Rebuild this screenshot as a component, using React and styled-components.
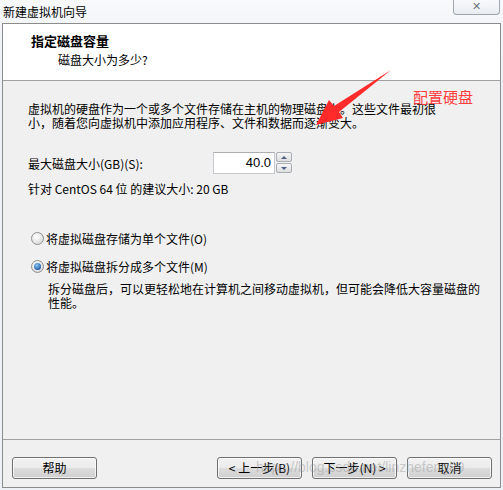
import React from "react";
import styled, { createGlobalStyle } from "styled-components";

const GlobalStyle = createGlobalStyle`
  html, body { margin: 0; padding: 0; }
  body {
    background: #f3f5f8;
    font-family: "Noto Sans CJK SC", "Liberation Sans", sans-serif;
    font-size: 12px;
    color: #000;
  }
`;

const Window = styled.div`
  position: relative;
  width: 503px;
  height: 490px;
  display: flex;
  flex-direction: column;
  overflow: hidden;
  background: linear-gradient(#f7f9fb, #eef1f5 60px);
`;

const TitleBar = styled.div`
  height: 23px;
  display: flex;
  justify-content: space-between;
  align-items: flex-start;
`;

const Title = styled.div`
  padding-left: 3px;
  line-height: 24px;
  font-size: 12px;
`;

const CloseBtn = styled.div`
  width: 45px;
  height: 14px;
  margin-right: 3px;
  border: 1px solid #9ea6b0;
  border-top: none;
  border-radius: 0 0 4px 4px;
  background: linear-gradient(#f8f9fb, #e9edf2);
  display: flex;
  align-items: center;
  justify-content: center;
  color: #6d7680;
  font-family: "DejaVu Sans", sans-serif;
  font-size: 11px;
  font-weight: bold;
  line-height: 14px;
`;

const Dialog = styled.div`
  margin: 0 2px 2px 2px;
  border: 1px solid #8c8c8c;
  flex: 1;
  display: flex;
  flex-direction: column;
  background: #f0f0f0;
`;

const Header = styled.div`
  height: 57px;
  box-sizing: border-box;
  background: #fff;
  border-bottom: 1px solid #a0a0a0;
  padding: 8px 0 0 28px;
`;

const HeaderTitle = styled.div`
  font-size: 13px;
  font-weight: bold;
  line-height: 18px;
`;

const HeaderSub = styled.div`
  margin-top: 1px;
  padding-left: 27px;
  line-height: 18px;
`;

const Body = styled.div`
  flex: 1;
  padding: 21px 0 0 25px;
  display: flex;
  flex-direction: column;
`;

const Para = styled.div`
  line-height: 14px;
  margin-top: ${(p) => p.$top || 0}px;
  padding-left: ${(p) => p.$indent || 0}px;
`;

const SizeRow = styled.div`
  margin-top: 22px;
  display: grid;
  grid-template-columns: 185px auto;
  align-items: center;
  height: 22px;
`;

const Spin = styled.div`
  display: flex;
  gap: 1px;
`;

const SpinInput = styled.div`
  width: 62px;
  height: 22px;
  box-sizing: border-box;
  border: 1px solid #c5c8ce;
  border-top-color: #abadb3;
  background: #fff;
  text-align: right;
  padding-right: 3px;
  font-family: "Liberation Sans", sans-serif;
  font-size: 13px;
  line-height: 20px;
`;

const SpinButtons = styled.div`
  display: flex;
  flex-direction: column;
  gap: 1px;
`;

const SpinBtn = styled.div`
  width: 16px;
  height: 10px;
  box-sizing: border-box;
  border: 1px solid #a9adb5;
  border-radius: 2px;
  background: linear-gradient(#f6f6f6, #dedede);
  display: flex;
  align-items: center;
  justify-content: center;
`;

const Tri = styled.div`
  width: 0;
  height: 0;
  border-left: 3px solid transparent;
  border-right: 3px solid transparent;
  ${(p) =>
    p.$up
      ? "border-bottom: 3px solid #4c5f85;"
      : "border-top: 3px solid #4c5f85;"}
`;

const RadioRow = styled.div`
  display: flex;
  align-items: center;
  gap: 2px;
  height: 18px;
  margin-top: ${(p) => p.$top}px;
  padding-left: 3px;
`;

const RadioCircle = styled.div`
  width: 13px;
  height: 13px;
  box-sizing: border-box;
  border-radius: 50%;
  border: 1px solid #8e8f8f;
  background: radial-gradient(circle at 40% 35%, #ffffff, #d9d9d9 80%);
  display: flex;
  align-items: center;
  justify-content: center;
`;

const RadioDot = styled.div`
  width: 7px;
  height: 7px;
  border-radius: 50%;
  background: radial-gradient(circle at 40% 35%, #8fcaf6, #1b5aa4 75%);
`;

const Footer = styled.div`
  border-top: 1px solid #a0a0a0;
  height: 48px;
  box-sizing: border-box;
  padding: 17px 8px 0 9px;
  display: flex;
  justify-content: space-between;
  align-items: flex-start;
`;

const BtnGroup = styled.div`
  display: flex;
  gap: 10px;
`;

const Button = styled.div`
  width: 85px;
  height: 22px;
  box-sizing: border-box;
  border: 1px solid #707070;
  border-radius: 3px;
  background: linear-gradient(#f2f2f2 0%, #ebebeb 50%, #dddddd 51%, #cfcfcf 100%);
  box-shadow: inset 0 0 0 1px rgba(255, 255, 255, 0.7);
  display: flex;
  align-items: center;
  justify-content: center;
  font-size: 12px;
  line-height: 20px;
`;

const Watermark = styled.div`
  position: absolute;
  left: 256px;
  top: 459px;
  font-family: "Liberation Sans", sans-serif;
  font-size: 14px;
  color: rgba(150, 150, 150, 0.45);
  pointer-events: none;
  white-space: nowrap;
`;

const Note = styled.div`
  position: absolute;
  left: 413px;
  top: 87px;
  color: #ff3d3d;
  font-size: 15px;
  line-height: 20px;
`;

const ArrowSvg = styled.svg`
  position: absolute;
  left: 0;
  top: 0;
  pointer-events: none;
`;

function Radio({ checked, children, top }) {
  return (
    <RadioRow $top={top}>
      <RadioCircle>{checked && <RadioDot />}</RadioCircle>
      <span>{children}</span>
    </RadioRow>
  );
}

export default function App() {
  return (
    <>
      <GlobalStyle />
      <Window>
        <TitleBar>
          <Title>新建虚拟机向导</Title>
          <CloseBtn>✕</CloseBtn>
        </TitleBar>
        <Dialog>
          <Header>
            <HeaderTitle>指定磁盘容量</HeaderTitle>
            <HeaderSub>磁盘大小为多少?</HeaderSub>
          </Header>
          <Body>
            <Para>
              虚拟机的硬盘作为一个或多个文件存储在主机的物理磁盘上。这些文件最初很
              <br />
              小，随着您向虚拟机中添加应用程序、文件和数据而逐渐变大。
            </Para>
            <SizeRow>
              <span>最大磁盘大小(GB)(S):</span>
              <Spin>
                <SpinInput>40.0</SpinInput>
                <SpinButtons>
                  <SpinBtn>
                    <Tri $up />
                  </SpinBtn>
                  <SpinBtn>
                    <Tri />
                  </SpinBtn>
                </SpinButtons>
              </Spin>
            </SizeRow>
            <Para $top={8}>针对 CentOS 64 位 的建议大小: 20 GB</Para>
            <Radio top={33}>将虚拟磁盘存储为单个文件(O)</Radio>
            <Radio top={10} checked>
              将虚拟磁盘拆分成多个文件(M)
            </Radio>
            <Para $top={7} $indent={20}>
              拆分磁盘后，可以更轻松地在计算机之间移动虚拟机，但可能会降低大容量磁盘的
              <br />
              性能。
            </Para>
          </Body>
          <Footer>
            <Button>帮助</Button>
            <BtnGroup>
              <Button>&lt; 上一步(B)</Button>
              <Button>下一步(N) &gt;</Button>
              <Button>取消</Button>
            </BtnGroup>
          </Footer>
        </Dialog>
        <Note>配置硬盘</Note>
        <ArrowSvg width="503" height="490" viewBox="0 0 503 490">
          <polygon
            points="391,70 339,112 343,118 316,125 329,100 334,106"
            fill="#ff2a2a"
          />
        </ArrowSvg>
        <Watermark>https://blog.csdn.net/linzhefeng89</Watermark>
      </Window>
    </>
  );
}
